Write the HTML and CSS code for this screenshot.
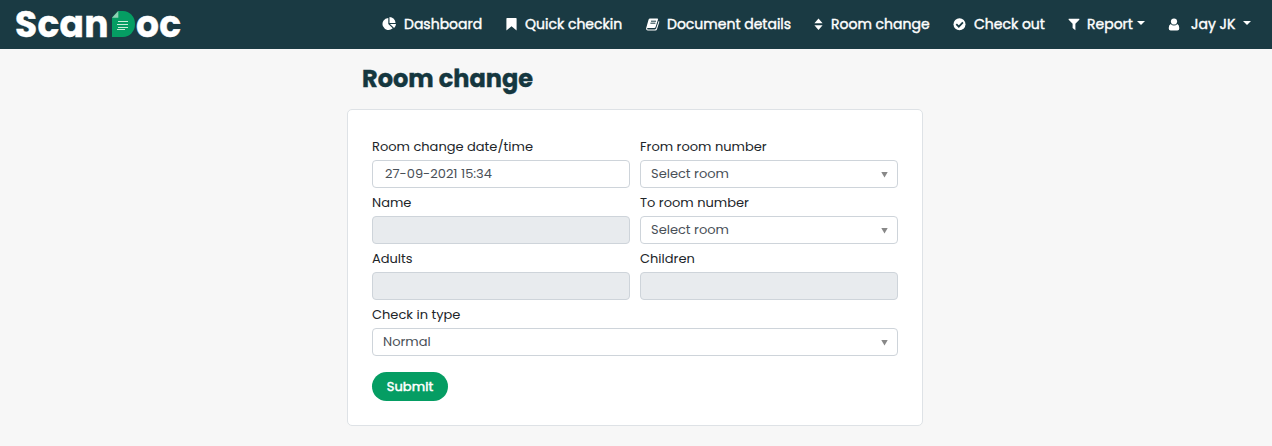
FILE: index.html
```html
<!DOCTYPE html>
<html lang="en">
<head>
<meta charset="utf-8">
<title>ScanDoc - Room change</title>
<link rel="stylesheet" href="styles.css">
</head>
<body>
<header class="navbar">
  <a class="brand"><span class="brand-scan">Scan</span><svg class="brand-mark" width="25" height="27" viewBox="0 0 25 27"><path d="M7 0h5a12 13 0 0 1 0 26H1V6.500z" fill="#059d63"/><path d="M7.300 0v6.800H1z" fill="#8fd0b4"/><path d="M7 10.500h10M6 13.500h11M7 16.500h10M6 18.500h8" stroke="#c9ecd9" stroke-width="1"/></svg><span class="brand-oc">oc</span></a>
  <nav class="menu">
    <a class="item dashboard"><svg class="icon" width="14" height="14" viewBox="0 0 14 14"><path d="M6.300 1v6l4.400 4.300A6 6 0 1 1 6.300 1z"/><path d="M7.500 0a6 6 0 0 1 6 6h-6z"/><path d="M8 7h6a6 6 0 0 1-1.900 4z"/></svg><span>Dashboard</span></a>
    <a class="item checkin"><svg class="icon" width="11" height="13" viewBox="0 0 11 13"><path d="M1 0h9q.6 0 .6.800V12.500L5.500 8.200.400 12.500V.8Q.400 0 1 0z"/></svg><span>Quick checkin</span></a>
    <a class="item details"><svg class="icon" width="14" height="13" viewBox="0 0 14 13"><path d="M4 .500h7.300q1 0 .7 1L9.600 9q-.3 1-1.300 1H2q-1 0-1 .7t1 .7h7q.8 0 1.100-.8L12.700 3q.8.400.500 1.300L11 11.300q-.4 1.200-1.600 1.200H1.800Q-.300 12.300.200 10L2.600 1.500Q3 .500 4 .500z"/><path d="M5 3.200h5M4.400 5.200h5" stroke="#1a3a43"/></svg><span>Document details</span></a>
    <a class="item room"><svg class="icon" width="9" height="13" viewBox="0 0 9 13"><path d="M4.500.500 8.600 5.200H.400zM.400 7.300h8.200L4.500 12z"/></svg><span>Room change</span></a>
    <a class="item checkout"><svg class="icon" width="13" height="13" viewBox="0 0 13 13"><circle cx="6.500" cy="6.300" r="6"/><path d="m3.300 6.100 2.500 2.500 4.100-4.200" fill="none" stroke="#1a3a43" stroke-width="1.800"/></svg><span>Check out</span></a>
    <a class="item report"><svg class="icon" width="12" height="13" viewBox="0 0 12 13"><path d="M.800.800h10.400q.5.400.1.900L7.400 5.800v6.400L4.600 10V5.800L.700 1.700Q.300 1.200.8.800z"/></svg><span>Report</span><i class="caret"></i></a>
    <a class="item user"><svg class="icon" width="12" height="13" viewBox="0 0 12 13"><circle cx="6" cy="3.500" r="3.100"/><path d="M2.700 6q1.500 1.500 3.300 1.500T9.300 6q2 1 2 4.200 0 2.300-2 2.300H2.700q-2 0-2-2.300Q.700 7 2.700 6z"/></svg><span>Jay JK</span><i class="caret"></i></a>
  </nav>
</header>
<main class="page">
  <h1 class="title">Room change</h1>
  <form class="card">
    <div class="field"><label>Room change date/time</label><div class="control date">27-09-2021 15:34</div></div>
    <div class="field"><label>From room number</label><div class="control select"><span>Select room</span></div></div>
    <div class="field"><label>Name</label><div class="control disabled"></div></div>
    <div class="field"><label>To room number</label><div class="control select"><span>Select room</span></div></div>
    <div class="field"><label>Adults</label><div class="control disabled"></div></div>
    <div class="field"><label>Children</label><div class="control disabled"></div></div>
    <div class="field wide"><label>Check in type</label><div class="control select"><span>Normal</span></div></div>
    <button class="submit" type="button">Submit</button>
  </form>
</main>
</body>
</html>
```
FILE: styles.css
```css
* { box-sizing: border-box; }
body { margin: 0; height: 446px; overflow: hidden; background: #f7f7f7; font-family: Poppins, Inter, sans-serif; font-size: 13px; color: #212529; }
.navbar { height: 49px; background: #1a3a43; display: flex; color: #fff; }
.brand { width: 382px; padding: 0 0 0 15px; height: 49px; display: flex; align-items: center; font-size: 36px; font-weight: 700; -webkit-text-stroke: .4px #fff; }
.brand-scan { width: 96px; letter-spacing: .3px; }
.brand-mark { flex: none; margin-top: -1px; }
.brand-oc { letter-spacing: .3px; }
.menu { display: flex; height: 49px; font-size: 14px; font-weight: 400; }
.item { display: flex; align-items: center; white-space: nowrap; }
.item span { -webkit-text-stroke: .4px #fff; }
.icon { flex: none; fill: currentColor; margin-top: -1px; }
.dashboard { width: 124px; gap: 8px; }
.checkin { width: 140px; gap: 8px; }
.details { width: 168px; gap: 7px; }
.room { width: 139px; gap: 8px; }
.checkout { width: 115px; gap: 8px; }
.report { width: 100px; gap: 7px; }
.user { gap: 11px; }
.report span { width: 47px; }
.user span { width: 42px; }
.caret { border: 4px solid transparent; border-top-color: #fff; border-bottom: 0; margin: -3px 0 0 -4px; }
.user .caret { margin-left: -1px; }
.page { width: 576px; margin-left: 347px; }
.title { margin: 0; padding-left: 15px; height: 60px; line-height: 59px; font-size: 24px; font-weight: 700; color: #15373f; -webkit-text-stroke: .4px #15373f; }
.card { height: 317px; background: #fff; border: 1px solid #dee2e6; border-radius: 5px; padding: 25px 24px; display: grid; grid-template-columns: 258px 258px; grid-auto-rows: 56px; column-gap: 10px; }
.wide { grid-column: 1 / 3; }
.field label { display: block; height: 25px; line-height: 23px; }
.control { height: 28px; border: 1px solid #ced4da; border-radius: 4px; line-height: 26px; color: #495057; padding: 0 10px; }
.date { padding-left: 12px; }
.disabled { background: #e8ebee; }
.select { display: flex; align-items: center; justify-content: space-between; padding-right: 9px; }
.select::after { content: ""; width: 7px; height: 6px; margin: 1px 0 0; background: #888; clip-path: polygon(0 0, 100% 0, 50% 100%); }
.submit { width: 76px; height: 29px; margin-top: 13px; border: 0; border-radius: 15px; background: #059d63; color: #fff; font: 400 13px Poppins, Inter, sans-serif; -webkit-text-stroke: .5px #fff; letter-spacing: .1px; padding: 0; }
```
